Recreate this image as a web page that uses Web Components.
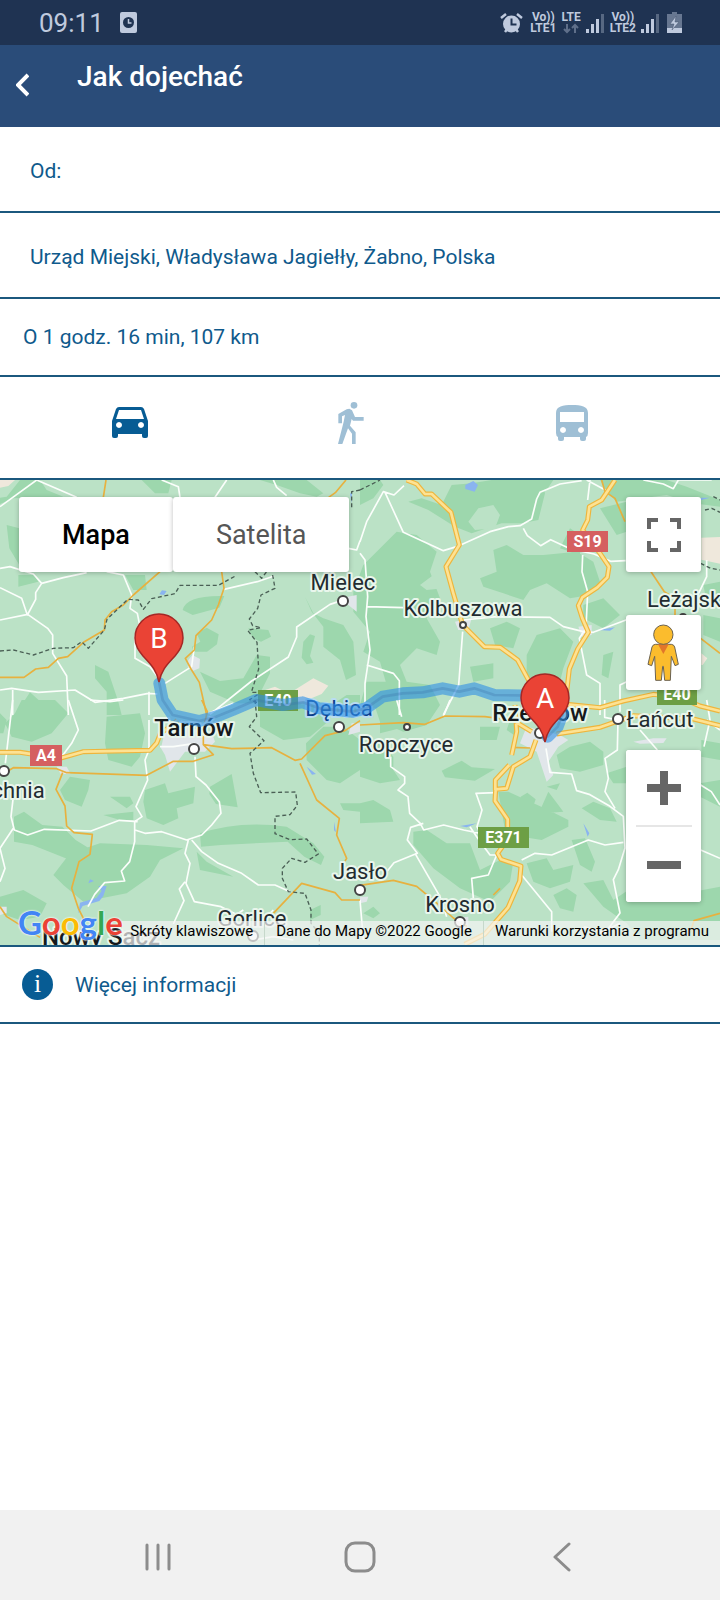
<!DOCTYPE html>
<html lang="pl">
<head>
<meta charset="utf-8">
<meta name="viewport" content="width=device-width, initial-scale=1">
<title>Jak dojechać</title>
<style>
    body {
        margin: 0;
        font-family: Roboto, "Liberation Sans", sans-serif;
        font-size: 21px;
        color: #0f5a8c;
        background: #fff;
        --line: #1b587e;
        --accent: #075c94;
    }
    directions-page {
        min-height: 100vh;
    }
</style>
</head>
<body>
<directions-page>
    <status-bar slot="top" time="09:11"></status-bar>
    <page-header slot="top">Jak dojechać</page-header>
    <place-field label="Od:"></place-field>
    <place-field label="Do:" value="Urząd Miejski, Władysława Jagiełły, Żabno, Polska"></place-field>
    <info-row>O 1 godz. 16 min, 107 km</info-row>
    <travel-modes></travel-modes>
    <route-map></route-map>
    <more-link>Więcej informacji</more-link>
    <nav-bar slot="bottom"></nav-bar>
</directions-page>

<script>
/* Base class: puts styles and markup in an open shadow root */
class BaseElement extends HTMLElement {
    connectedCallback() {
        if (this.shadowRoot) return;
        const shadow = this.attachShadow({ mode: 'open' });
        shadow.innerHTML = `
            <style>
                :host { display: block; }
                * { box-sizing: border-box; }
                svg { display: block; }
                button {
                    margin: 0;
                    padding: 0;
                    border: 0;
                    background: none;
                    color: inherit;
                    font: inherit;
                    cursor: pointer;
                }
                ${this.renderStyle()}
            </style>
            ${this.renderHtml()}
        `;
    }
    renderStyle() { return ''; }
    renderHtml() { return '<slot></slot>'; }
}

class DirectionsPage extends BaseElement {
    renderStyle() {
        return `
            :host { display: flex; flex-direction: column; }
            main { flex: 1; }
        `;
    }
    renderHtml() {
        return `
            <slot name="top"></slot>
            <main><slot></slot></main>
            <slot name="bottom"></slot>
        `;
    }
}

class StatusBar extends BaseElement {
    renderStyle() {
        return `
            :host {
                display: flex;
                align-items: center;
                justify-content: space-between;
                height: 45px;
                padding: 0 38px 0 39px;
                box-sizing: border-box;
                background: #1f3352;
                color: #bfcade;
            }
            .group { display: flex; align-items: center; gap: 16px; }
            .icons { gap: 5px; }
            .time { font-size: 26px; line-height: 30px; }
            .sim {
                display: flex;
                flex-direction: column;
                align-items: center;
                font-size: 12px;
                font-weight: 700;
                line-height: 11px;
            }
            .gap { margin-left: 2px; }
        `;
    }
    renderSignal() {
        return `
            <svg width="19" height="20" fill="currentColor">
                <path d="M0 16h3v4H0zM5 11h3v9H5zM10 6h3v14h-3z"/>
                <path d="M15 1h3v19h-3z" opacity=".35"/>
            </svg>
        `;
    }
    renderHtml() {
        return `
            <div class="group">
                <span class="time">${this.getAttribute('time')}</span>
                <svg width="17" height="21" viewBox="0 0 17 21">
                    <rect width="17" height="21" rx="2" fill="currentColor"/>
                    <circle cx="8.500" cy="10.500" r="5.500" fill="#1f3352"/>
                    <path d="M8.500 7v4h3" fill="none" stroke="currentColor" stroke-width="1.500"/>
                </svg>
            </div>
            <div class="group icons">
                <svg width="23" height="20" viewBox="0 0 23 20">
                    <circle cx="11.500" cy="11" r="8.500" fill="currentColor"/>
                    <path d="M1 5l5-4M22 5l-5-4M5 19l3-4M18 19l-3-4" stroke="currentColor" stroke-width="2.500"/>
                    <path d="M11.500 5.500v6h5" fill="none" stroke="#1f3352" stroke-width="2"/>
                </svg>
                <span class="sim gap"><span>Vo))</span><span>LTE1</span></span>
                <span class="sim">
                    <span>LTE</span>
                    <svg width="16" height="11" viewBox="0 0 16 11" fill="none" stroke="currentColor" stroke-width="2" opacity=".4">
                        <path d="M4 1v8M1 6l3 3 3-3M12 10V2M9 5l3-3 3 3"/>
                    </svg>
                </span>
                ${this.renderSignal()}
                <span class="sim"><span>Vo))</span><span>LTE2</span></span>
                ${this.renderSignal()}
                <svg class="gap" width="15" height="21" viewBox="0 0 15 21">
                    <path d="M5 0h5v2h5v19H0V2h5z" fill="currentColor" opacity=".45"/>
                    <path d="M0 16h15v5H0z" fill="currentColor"/>
                    <path d="M9 4l-6 8h4l-2 6 7-8H8z" fill="currentColor" stroke="#44556f" stroke-width=".5"/>
                </svg>
            </div>
        `;
    }
}

class PageHeader extends BaseElement {
    renderStyle() {
        return `
            :host {
                display: flex;
                align-items: flex-start;
                height: 82px;
                padding: 16px;
                box-sizing: border-box;
                background: #2a4c79;
                color: #fff;
            }
            button { padding: 12px 0 0; }
            h1 {
                margin: 0;
                padding-left: 48px;
                font-size: 28px;
                font-weight: 500;
                line-height: 32px;
            }
        `;
    }
    renderHtml() {
        return `
            <button type="button" aria-label="Wstecz">
                <svg width="13" height="24" viewBox="0 0 13 24" fill="none" stroke="currentColor" stroke-width="4">
                    <path d="M12 2L2 12l10 10"/>
                </svg>
            </button>
            <h1><slot></slot></h1>
        `;
    }
}

class PlaceField extends BaseElement {
    renderStyle() {
        return `
            :host { border-bottom: 2px solid var(--line); }
            input {
                display: block;
                width: 100%;
                height: 84px;
                padding: 4px 30px 0;
                border: 0;
                outline: 0;
                background: none;
                color: inherit;
                font: inherit;
            }
            input::placeholder { color: inherit; opacity: 1; }
        `;
    }
    renderHtml() {
        const label = this.getAttribute('label');
        return `<input type="text" aria-label="${label}" placeholder="${label}" value="${this.getAttribute('value') || ''}">`;
    }
}

class InfoRow extends BaseElement {
    renderStyle() {
        return `
            :host {
                padding: 26px 23px 25px;
                line-height: 25px;
                border-bottom: 2px solid var(--line);
            }
        `;
    }
}

class TravelModes extends BaseElement {
    renderStyle() {
        return `
            :host {
                display: grid;
                grid-template-columns: repeat(3, 1fr);
                padding: 0 37px 0 19px;
                border-bottom: 2px solid var(--line);
            }
            button {
                display: flex;
                align-items: center;
                justify-content: center;
                height: 101px;
                padding-bottom: 10px;
                color: #9fbfd5;
            }
            button[aria-pressed="true"] { color: var(--accent); }
        `;
    }
    renderHtml() {
        return `
            <button type="button" aria-label="Samochód" aria-pressed="true">
                <svg width="36" height="31" viewBox="0 0 36 31" fill="currentColor">
                    <path fill-rule="evenodd" d="M7 0h22q2 0 3 2l4 12v15q0 2-2 2h-2q-2 0-2-2v-2H6v2q0 2-2 2H2q-2 0-2-2V14L4 2q1-2 3-2zM7 3L4 12h28L29 3zM7 15a3 3 0 1 0 .01 0zM29 15a3 3 0 1 0 .01 0z"/>
                </svg>
            </button>
            <button type="button" aria-label="Pieszo" aria-pressed="false">
                <svg width="26" height="42" viewBox="27 21 78 126" fill="currentColor">
                    <circle cx="75" cy="31" r="10"/>
                    <path d="M28 57l25-14 8-2 8 5 9 20h26v11H72l-4-5-5 20 17 20v35H69v-31L57 100l-17 47H27l17-67 4-20-9 4v21H28z"/>
                </svg>
            </button>
            <button type="button" aria-label="Autobus" aria-pressed="false">
                <svg width="32" height="36" viewBox="0 0 32 36" fill="currentColor">
                    <path fill-rule="evenodd" d="M16 0c9 0 16 1 16 8v20q0 3-2 4v2q0 2-2 2h-2q-2 0-2-2v-2H8v2q0 2-2 2H4q-2 0-2-2v-2q-2-1-2-4V8c0-7 7-8 16-8zM4 7v10h24V7zM7 22a3 3 0 1 0 .01 0zM25 22a3 3 0 1 0 .01 0z"/>
                </svg>
            </button>
        `;
    }
}

/* Terrain is drawn in four tiles, three units to a pixel */
const TILES = [
    {
        x: 0, y: -15,
        forest: `M60 15h60l20 30 50 20-150 5-60 25-20 40 0-60 60-10z M425 15h90l-10 40-40 0z M780 15l50 15 70 25 50 10 20-10-50-40z
            M20 150l38 10 0 110-30-50z M375 300l60 0 5 45-40 0z M548 405q10-45 125-42l-15 35-80 22z M590 475l30-17 36 20-5 30-30 22-40 0-5-15 25-15z
            M745 460l60 5 8 20-30 15-25-10z M915 365l25 50 30 15 60 20 30 50 8 100-30 15-18-60-50-40 0-60-35-45z
            M910 500l20-22 15 5-15 60 10 20-20 5-15-20z M285 570l40 20 30 90 10 40-45 0 0-70-35-40z
            M600 590l60 28 70-8 40-70 40 5 0 50-30 60-10 30-60 0-80-35z M65 690l25-38 45 40-5 28-60 0z M55 300l50 0 10 20-60 15z
            M950 700l30 0 60-40 40 0 0 60-130 0z`,
        beige: 'M0 15h45l-20 18-25 5z M860 660l80-50 45 22-20 25-60 25-45-5z M795 645l30-10 20 10-20 10z',
        urban: 'M565 555l12-15 23 12-2 28-20 8-15-12z M1020 370l50-10 0 50-25-20z',
        minor: `M0 95L110 15l120 52 M485 15l50 20 5 32 M680 15l-35 52 M820 15l10 22 30 25 M0 280l30-5 70 22 25 28-18 28 0 20-25 47-17-50-65-32
            M125 325l65-17 70-15 M0 435l83-17 60 42 15 20 0 55 42 68 5 117 M320 290l50 10 25 60-5 40 22 15 6 30-13 40 0 65 45 25 30 40
            M495 625l80-50 8-60 M0 645l35-5 80 12 110-7 60 37 85-12 75-15 27 2 M38 645v75 M447 650v70 M672 343l100-23 50-17
            M1045 370l-55 18-100 68 0 30-25 60-110 72-125 100 M1045 220l25 5 10-28`,
        orange: `M318 15l-8 52 M480 290l-80 70-30 30-35 20-20 25-2 30-60 35-50 45-28 5-30 27-38 5-35 25-97 0 M665 290l7 50-17 50-20 45-47 47-5 43-27 25 17 32 25 40 22 98
            M1038 15l-32 38-20 14`,
        border: `M0 528l40-3 60 15 60-20 60-2 25-18 20 20 48-55 8-32 62-60 32 2 15 28 25-32 70-15 15-25 115 0 55-30 M765 290l20 20 15-20
            M818 300l7 40-42 20-10 40-25 32 10 20 25 6-40 8 28 36 5 80-22 70 30 0-35 22 25 10 M1080 45l-25 5 0 50`,
        water: 'M478 358l8-12 14 2-8 12z M1050 55l6 0-2 30z',
    },
    {
        x: 1080, y: -15,
        forest: `M0 15h60l10 15-30 40-40 20z M145 80l40-10 60 20 30-60 60-5 60-10 150 0 10 40-20 80-50 10-60 0-90 30-50-20-80-50z
            M110 170l60 10 60 50-20 60 30 80-40 60 40 70-10 40-60-20-50 50 20 50 70 10 30 60-40 60-70 20-70-30-20-60 40-50-20-70-50-30 20-60-50-60 0-60 30-80z
            M400 225l40-15 50 30 60 0 100-10 50 30 20 60-30 40-60 10-70-45-50 20-20 30-60-20-60-20-10-25 50-20z
            M390 460l50-20 40 20-20 60-55-10z M500 540l30-60 70-20 40 40-30 80-20 80-50 0-40-60z
            M720 15h200l60 20 100 40 0 20-80-10-80-25-150 20-30-30z M720 100l80-20 0 90-30 10z M670 390l60-20 50 50-50 40-60-30z
            M730 540l30-10-15 80-20-10z M1030 330l50-10 0 80-40-20z M1030 420l50 10 0 70-50-20z M520 15l60 0-20 30-50 10z M330 575l70-10 0 45-60 10z
            M20 620l60 0 20 60-60 20-40-10z M660 180l0 60-60-20 30-60z`,
        clearing: 'M325 140l30-40 45-10 20 30-15 40-60 5z M180 330l40-30 30 40-50 5z',
        beige: 'M1024 188l56-2 0 80-56-12z M890 640l50-30 40 20-10 40-60 15z M1024 535l18 15-14 20-4 0z',
        urban: 'M285 440l50-10-10 35-30 0z M655 455l40-5 0 30-30 5z',
        minor: `M0 200l20-60 50-90 32 10 30-28 M75 52l55 120 120 55 40-12 100-45 55-15 35-3 35-20 15-60 10-20 60-25 65-10 M490 160l12 22 40 30 30-18 60 28 70 15 50 22 45-2
            M690 15l-7 60 M680 15l60 32 M668 240l-2 50 17 60-5 110-20 30 22 110 40 25 0 95 M20 395l110 3 M310 435l100-10 160 2 40 28 60 15 30 2 100-38 28-4
            M308 470l-12 160-46 90 M0 235l15 20 8 110-5 60 12 100-15 100 0 95 M20 570l80 25 18 22 0 103 M850 15l60 12 30 14 15-26 100 0 M1040 255l0 50-30 62 M780 710l0-80 20-10`,
        orange: 'M725 15l10 35 30 20 30 70 M873 290l40 60 32 20 M945 400v25 M1022 490l58 45 M465 710l60-20',
        major: `M140 15l30 12 25 30 20 0 58 55 25 98-40 65 22 80 28 95 65 65 48 2 52 38 35 65 30 50 M765 15l-40 60-37 20-5 40-15 30 52 70 27 40-5 32-30 30-45 30-12 25
            12 38 18 42-32 50-25 60-8 70 M620 688l100 10 70-20 90-20 80 10 60 25 60 15`,
        border: 'M0 45l60-30 M1022 265l30 15 28 5 M1060 65l20 10 M1035 105l20-5 25 12',
        water: 'M316 30l24-12 14 12-10 20-28-8z M715 465l50-8-15 10z M1022 68l28 0-28 8z',
    },
    {
        x: 0, y: 660,
        forest: `M65 0h100l40 40-50 60-60 25-60-15-20-40 30-30z M320 50l100-10 15 60-15 70-25 30-70-20-10-50z M180 270l30-40 60 10-5 30-20 50-50-20z
            M435 270l60-20 10 30 80-20-5 50-50 15 5 30-45 20-50-20-10-50z M310 345l90-10 0 25-40 0z M630 260l65-38 18 100-65-10-20-30z
            M600 400q120-40 260-20l80 50 33 40-10 25-50-25-50-45-200 10-60 5z M210 460l90-30 140 5 110 10-70 35-30 50-70 50-130 25-60-50-30-30z
            M42 350l30-15 55 40 60 5 40 40 40 25-10 90-60-60-100-40-55-10z M0 590l70-20 70 40-20 40-60 10-60-20z M590 455l30 30 80 45-100-20z
            M780 0l200 20 10 40-60 50-80 10-70-40z M918 130l52-50 60 0 50 40 0 90-60 40-40-10-60-60z M1020 310l60 0 0 25-50-5z M930 630l32-15 0 30-32 15z
            M330 290l60 0 10 20-20 15z M0 40l20 20-10 40-10 0z`,
        urban: 'M495 90l50-30 30 25 60 10 10 30-30 30-60 0-45 60-15-50-12-20z M170 200l30 0 12 22-30 0z M1055 70h25v25l-35 10z M0 620h20v20l-20 5z',
        minor: `M38 0l-22 190 M205 0l30 90-20 40-30 40 M447 60l0 90-12 30 8 60-35 80 18 30-22 15 0 60-15 60-25 28 10 30-60 5-30 35-20 37 M40 290l-7 60 10 40 40 15 50-17 140 5 85-32 55 4
            M0 545l15-40-15-60 40-60 M405 390l30 10 50-5 75 25 45-15 30-30 28-35-5-35-40-50-30-25-3-60 M565 420l-10 40 15 30-12 60 25 55 80 15 50 25
            M575 420l30 35 50 35 70 30 50 35 50 0 45 20 M555 545l-17 22 14 35-32 70 M480 140l40 0 65-10 M625 40l75-30 M700 650l30-20 M800 650l20-20 M270 0l60 5 40-5 M760 720l60-10 60 10`,
        orange: `M20 215l20-12 130 3 30 12 240 8 80-42 60 0 60-20-30-30 85 12 120-3 70 38 20-4 70-70 60-15 45-30 M188 218l-20 50 27 50 5 60 22 20 55 5-7 60-33 22-22 80 20 60 20 40
            M900 190l50 110 68 55-8 50 30 70-5 8 M0 620l20 30 100 62 M820 640l85-90 100 28 20 22 55 0 M605 0l17 35-12 50 0 50`,
        major: 'M0 157l60 0 120 18 70-20 200-4 20-22 12-30 30-20 20-18',
        border: `M765 0l5 50-22 30 44 42-42 38 10 60 22 58 105-2 5 40-22 28-45 5 0 52 45 18 50-2 35 45-40 25-40-12-28 30 0 30 18 40 50 5 18 50 0 40 25 30 0 40`,
        water: 'M235 640l5-32 50-15 15-20-10-15 25 0-10 30-12 15-50 15z M265 550l5-12 12 5z M920 200l28 22-12 2z M1002 365l6 32-6-6z',
    },
    {
        x: 1080, y: 660,
        forest: `M0 140l60-20 40 50 0 40 20 30-60 10-60-20z M0 310l40-10 50 30 10 35-100 5z M245 212l60-30 30 20 70 5-60 35-90-10z M60 60l60 0 0 25-60 15z
            M160 395l40-5 60 40 70 0 30 80 60-30 40 5-10 60-60 60-90-40-80-60-60-70z M415 275l30 0 120 55 60 30 0 20-80 40-60-10-50-20z
            M482 290l20-12 25 20-10 30-30-5z M545 320l20-45 30 40 15 20-60 5z M560 260l40-10-10 20z M635 420l40-5 30 70-10 30-35-20z M665 325l35-20 50 20 20 40-50-5z
            M590 165l40-25 60-15 40 30 0 40-70 20-60-10z M500 490l60-15 20 35 60-15-10 50-60 20-50-20z M580 585l40-20 30 20-10 50-40-10z
            M670 550l60-10 30 60 60-40 50 40 210-40 0 160-240 0-40-50-70-50z M10 640l30-20 20 20-20 15z M740 220l60-20 0 50-40 0z M1020 250l60-10 0 80-60-30z
            M450 60l30 10-10 40-30-20z M1024 120l56 10 0 50-56-10z M360 80l60 0-10 40-50 0z M0 560l20 5-10 20z`,
        urban: 'M500 80l100 25 25 15-30 20-30 45 15 40-20 20-30-90-50-25z M0 590l25 0-5 15-20 5z M820 125l60-10 40 0-10 14-70 2z M285 655l40-5 0 40-20 0z',
        minor: `M92 170l0 30 42 30 0 20-20 20 30 20 5 50 32 30 10 20 60-15 60 15 50 10-10-20 15-50-18-50 60-2 M190 370l-38 12-10 38 30 40-70 28-20 25 M165 460l75 130 20 60
            M330 380l20 30 40 55 20 0-25 60-50 10 5 60 M485 480l40-20 50 5 110-45 50 15 55-8 M485 525l90 110 0 60 M558 145l12 72 65 5 15 50 40 12 60 35 40 30 5 95-20 65-15 30
            20 100-45 60-60-18-25 15 M765 325l-30-50 10-40-10-60 37-25 2-90-40-8 0-52 M840 90l52 60 M1040 0l10 60-18 80 M1022 255l32 20 26 40 M1022 450l58 25 M110 0l15 50 M250 50l20-50
            M0 600l10 120 M720 700l60-30 M1040 60l40 30`,
        orange: 'M0 75l130-7 65 5 60-25 120 2 90 12 M0 556l100-15 70 18 60 50 50 45 40 25 M990 700l12-38 78-22 M455 142l55 2 M400 585l20-20',
        major: `M528 120l-18 50-50 30-20 65-33 3-2 35 38 55 0 60-30 42 10 18 60 20-4 45-35 80-70 80-60 30 M590 102l130-20 100-35 180 10 80 20 M465 15l5 80-15 70 M448 195l-42 45 0 30 M465 65l50 30`,
        water: 'M670 370l18 30-5 10z M300 378l50-8-30 12z',
    },
];

/* Layers from bottom to top; a cased road is stroked twice */
const LAYERS = [
    { key: 'forest', fill: '#9dd7ad' },
    { key: 'clearing', fill: '#bbe2c6' },
    { key: 'beige', fill: '#efe8dc' },
    { key: 'urban', fill: '#e1e6ea' },
    { key: 'water', fill: '#8ab4f0' },
    { key: 'minor', stroke: '#fbfefb', width: 5 },
    { key: 'orange', stroke: '#e7b13f', width: 5 },
    { key: 'major', stroke: '#eeb53c', width: 15 },
    { key: 'major', stroke: '#fde293', width: 8 },
    { key: 'border', stroke: '#4a5f55', width: 4, dash: '12 8' },
];

const TOWNS = [
    { name: 'Mielec', x: 343, y: 110, cx: 343, cy: 121, r: 5 },
    { name: 'Kolbuszowa', x: 463, y: 136, cx: 463, cy: 145, r: 3 },
    { name: 'Leżajsk', x: 684, y: 127, cx: 683, cy: 137, r: 3 },
    { name: 'Tarnów', x: 194, y: 256, cx: 194, cy: 269, r: 5, kind: 'big' },
    { name: 'Dębica', x: 339, y: 236, cx: 339, cy: 247, r: 5, kind: 'on-route' },
    { name: 'Ropczyce', x: 406, y: 272, cx: 407, cy: 247, r: 3 },
    { name: 'Rzeszów', x: 540, y: 241, cx: 540, cy: 253, r: 5, kind: 'big' },
    { name: 'Łańcut', x: 660, y: 247, cx: 618, cy: 239, r: 5 },
    { name: 'Bochnia', x: 5, y: 318, cx: 4, cy: 291, r: 5 },
    { name: 'Jasło', x: 360, y: 399, cx: 360, cy: 410, r: 5 },
    { name: 'Krosno', x: 460, y: 432, cx: 460, cy: 442, r: 5 },
    { name: 'Gorlice', x: 252, y: 446, cx: 253, cy: 456, r: 5 },
    { name: 'Nowy Sącz', x: 101, y: 465, kind: 'big' },
];

const SHIELDS = [
    { name: 'A4', x: 30, y: 265, width: 32, color: '#d55f60' },
    { name: 'S19', x: 567, y: 51, width: 41, color: '#d55f60' },
    { name: 'E371', x: 478, y: 347, width: 51, color: '#6d9f45' },
    { name: 'E40', x: 258, y: 210, width: 40, color: '#6d9f45' },
    { name: 'E40', x: 657, y: 204, width: 40, color: '#6d9f45' },
];

const ROUTE = 'M478 610l10 50 30 45 80 18 50-13 50-20 70-30 80 15 60-8 50 18 100 10 40-10 50-35 60-10 60-3 60-12 50 10 45-10 60 20 120 2 75 23 10 30-15 40-30 30';

class RouteMap extends BaseElement {
    renderStyle() {
        return `
            :host {
                position: relative;
                height: 465px;
                overflow: hidden;
                border-bottom: 2px solid var(--line);
                background: #bbe2c6;
            }
            .map { width: 100%; height: 100%; }
            .town {
                font-size: 22px;
                fill: #222b30;
                stroke: #e9f6ec;
                stroke-width: 4;
                stroke-linejoin: round;
                paint-order: stroke;
                text-anchor: middle;
            }
            .big { font-weight: 500; font-size: 24px; fill: #15191c; }
            .on-route { fill: #0b3f8c; stroke: #b9dcf0; }
            .shield {
                font-size: 16px;
                font-weight: 700;
                fill: #fff;
                text-anchor: middle;
            }
            .pin { font-size: 28px; fill: #fff; text-anchor: middle; }
            .types {
                position: absolute;
                top: 17px;
                left: 19px;
                display: flex;
                font-size: 27px;
            }
            .controls {
                position: absolute;
                top: 17px;
                right: 19px;
                display: flex;
                flex-direction: column;
            }
            .types button, .controls button, .zoom {
                background: #fff;
                border-radius: 3px;
                box-shadow: 0 1px 5px rgba(0, 0, 0, 0.25);
            }
            .types button {
                height: 75px;
                padding: 0 43px;
                color: #565656;
            }
            .types button[aria-pressed="true"] { color: #000; font-weight: 500; }
            .controls button {
                display: flex;
                align-items: center;
                justify-content: center;
                width: 75px;
                height: 75px;
            }
            .pegman { margin: 43px 0 60px; }
            .zoom hr {
                width: 56px;
                height: 2px;
                margin: 0 auto;
                border: 0;
                background: #e6e6e6;
            }
            .zoom button { box-shadow: none; }
            .logo {
                position: absolute;
                left: 18px;
                bottom: 5px;
                font-family: Lato, Roboto, sans-serif;
                font-size: 33px;
                font-weight: 700;
                line-height: 36px;
                text-decoration: none;
                color: #4285f4;
                text-shadow: 0 0 2px #fff, 0 0 2px #fff;
            }
            .red { color: #ea4335; }
            .yellow { color: #fbbc04; }
            .green { color: #34a853; }
            .legal {
                position: absolute;
                right: 0;
                bottom: 0;
                display: flex;
                font-size: 15px;
                color: #000;
            }
            .legal > * {
                padding: 0 11px 4px;
                border-left: 1px solid #c6d8cb;
                background: rgba(245, 245, 245, 0.7);
                color: inherit;
                text-decoration: none;
                line-height: 20px;
            }
            .legal > :first-child { padding-left: 8px; border-left: 0; }
        `;
    }
    renderLayer(layer) {
        const paint = layer.fill
            ? `fill="${layer.fill}"`
            : `fill="none" stroke="${layer.stroke}" stroke-width="${layer.width}" stroke-dasharray="${layer.dash || 'none'}"`;
        return `
            <g ${paint} stroke-linejoin="round">
                ${TILES.map((tile) => `<path transform="translate(${tile.x} ${tile.y})" d="${tile[layer.key] || ''}"/>`).join('')}
            </g>
        `;
    }
    renderTown(town) {
        const dot = town.r ? `<circle cx="${town.cx}" cy="${town.cy}" r="${town.r}" fill="#fff" stroke="#444" stroke-width="2"/>` : '';
        return `${dot}<text class="town ${town.kind || ''}" x="${town.x}" y="${town.y}">${town.name}</text>`;
    }
    renderShield(shield) {
        return `
            <rect x="${shield.x}" y="${shield.y}" width="${shield.width}" height="21" fill="${shield.color}"/>
            <text class="shield" x="${shield.x + shield.width / 2}" y="${shield.y + 16}">${shield.name}</text>
        `;
    }
    renderPin(letter, x, y) {
        return `
            <g transform="translate(${x} ${y})">
                <path d="M0 0C-3-14-10-19-16-26-20-31-24-36-24-44A24 24 0 1 1 24-44C24-36 20-31 16-26 10-19 3-14 0 0z" fill="#ea4335" stroke="#a52725" stroke-width="1.500"/>
                <text class="pin" y="-34">${letter}</text>
            </g>
        `;
    }
    renderHtml() {
        return `
            <svg class="map" viewBox="0 0 720 465" preserveAspectRatio="xMidYMid slice" role="img" aria-label="Trasa Rzeszów – Żabno">
                <svg width="720" height="465" viewBox="0 0 2160 1395">${LAYERS.map((layer) => this.renderLayer(layer)).join('')}</svg>
                ${TOWNS.map((town) => this.renderTown(town)).join('')}
                ${SHIELDS.map((shield) => this.renderShield(shield)).join('')}
                <svg width="720" height="465" viewBox="0 0 2160 1395" fill="none" stroke-linejoin="round" stroke-linecap="round">
                    <path d="${ROUTE}" stroke="#2f8fe6" stroke-width="36" opacity=".6"/>
                    <path d="${ROUTE}" stroke="#3c6fa8" stroke-width="8" opacity=".3"/>
                </svg>
                ${this.renderPin('B', 159, 202)}
                ${this.renderPin('A', 545, 262)}
            </svg>
            <div class="types">
                <button type="button" aria-pressed="true">Mapa</button>
                <button type="button" aria-pressed="false">Satelita</button>
            </div>
            <div class="controls">
                <button type="button" aria-label="Pełny ekran">
                    <svg width="34" height="34" fill="none" stroke="#666" stroke-width="4"><path d="M2 11V2h9M23 2h9v9M32 23v9h-9M11 32H2v-9"/></svg>
                </button>
                <button type="button" class="pegman" aria-label="Street View">
                    <svg width="34" height="58" viewBox="860 447 102 174" fill="#fbbc2d" stroke="#6b6250" stroke-width="3" stroke-linejoin="round">
                        <path d="M885 508h48q8 1 10 8l11 52-10 4-11-28-3 72h-17l-4-42h-2l-4 42h-17l-3-72-9 28-11-4 12-52q2-7 10-8z"/>
                        <path d="M893 508h32l-16 29z" fill="#e2762a" stroke="none"/>
                        <circle cx="909" cy="479" r="29"/>
                    </svg>
                </button>
                <div class="zoom">
                    <button type="button" aria-label="Powiększ">
                        <svg width="34" height="34" fill="#666"><path d="M13 0h8v13h13v8H21v13h-8V21H0v-8h13z"/></svg>
                    </button>
                    <hr>
                    <button type="button" aria-label="Pomniejsz">
                        <svg width="34" height="8"><rect width="34" height="8" fill="#666"/></svg>
                    </button>
                </div>
            </div>
            <div class="legal">
                <button type="button">Skróty klawiszowe</button>
                <span>Dane do Mapy ©2022 Google</span>
                <a href="#warunki">Warunki korzystania z programu</a>
            </div>
            <a class="logo" href="#google">G<span class="red">o</span><span class="yellow">o</span>g<span class="green">l</span><span class="red">e</span></a>
        `;
    }
}

class MoreLink extends BaseElement {
    renderStyle() {
        return `
            :host { border-bottom: 2px solid var(--line); }
            a {
                display: flex;
                align-items: center;
                gap: 22px;
                height: 75px;
                padding: 0 22px;
                color: inherit;
                text-decoration: none;
            }
            .icon {
                width: 31px;
                height: 31px;
                border-radius: 50%;
                background: var(--accent);
                color: #fff;
                font: 26px/30px "Liberation Serif", serif;
                text-align: center;
            }
        `;
    }
    renderHtml() {
        return `<a href="#informacje"><span class="icon" aria-hidden="true">i</span><slot></slot></a>`;
    }
}

class NavBar extends BaseElement {
    renderStyle() {
        return `
            :host {
                display: flex;
                justify-content: center;
                background: #f1f1f1;
                color: #8c8c8c;
            }
            button {
                display: flex;
                align-items: center;
                justify-content: center;
                width: 202px;
                height: 90px;
                padding-top: 3px;
            }
            svg { fill: none; stroke: currentColor; stroke-width: 3; stroke-linecap: round; stroke-linejoin: round; }
        `;
    }
    renderHtml() {
        return `
            <button type="button" aria-label="Ostatnie"><svg width="28" height="30"><path d="M3 3v24M14 3v24M25 3v24"/></svg></button>
            <button type="button" aria-label="Ekran główny"><svg width="32" height="32"><rect x="2" y="2" width="28" height="28" rx="9"/></svg></button>
            <button type="button" aria-label="Wstecz"><svg width="18" height="30"><path d="M16 2L2 15l14 13"/></svg></button>
        `;
    }
}

customElements.define('directions-page', DirectionsPage);
customElements.define('status-bar', StatusBar);
customElements.define('page-header', PageHeader);
customElements.define('place-field', PlaceField);
customElements.define('info-row', InfoRow);
customElements.define('travel-modes', TravelModes);
customElements.define('route-map', RouteMap);
customElements.define('more-link', MoreLink);
customElements.define('nav-bar', NavBar);
</script>
</body>
</html>
